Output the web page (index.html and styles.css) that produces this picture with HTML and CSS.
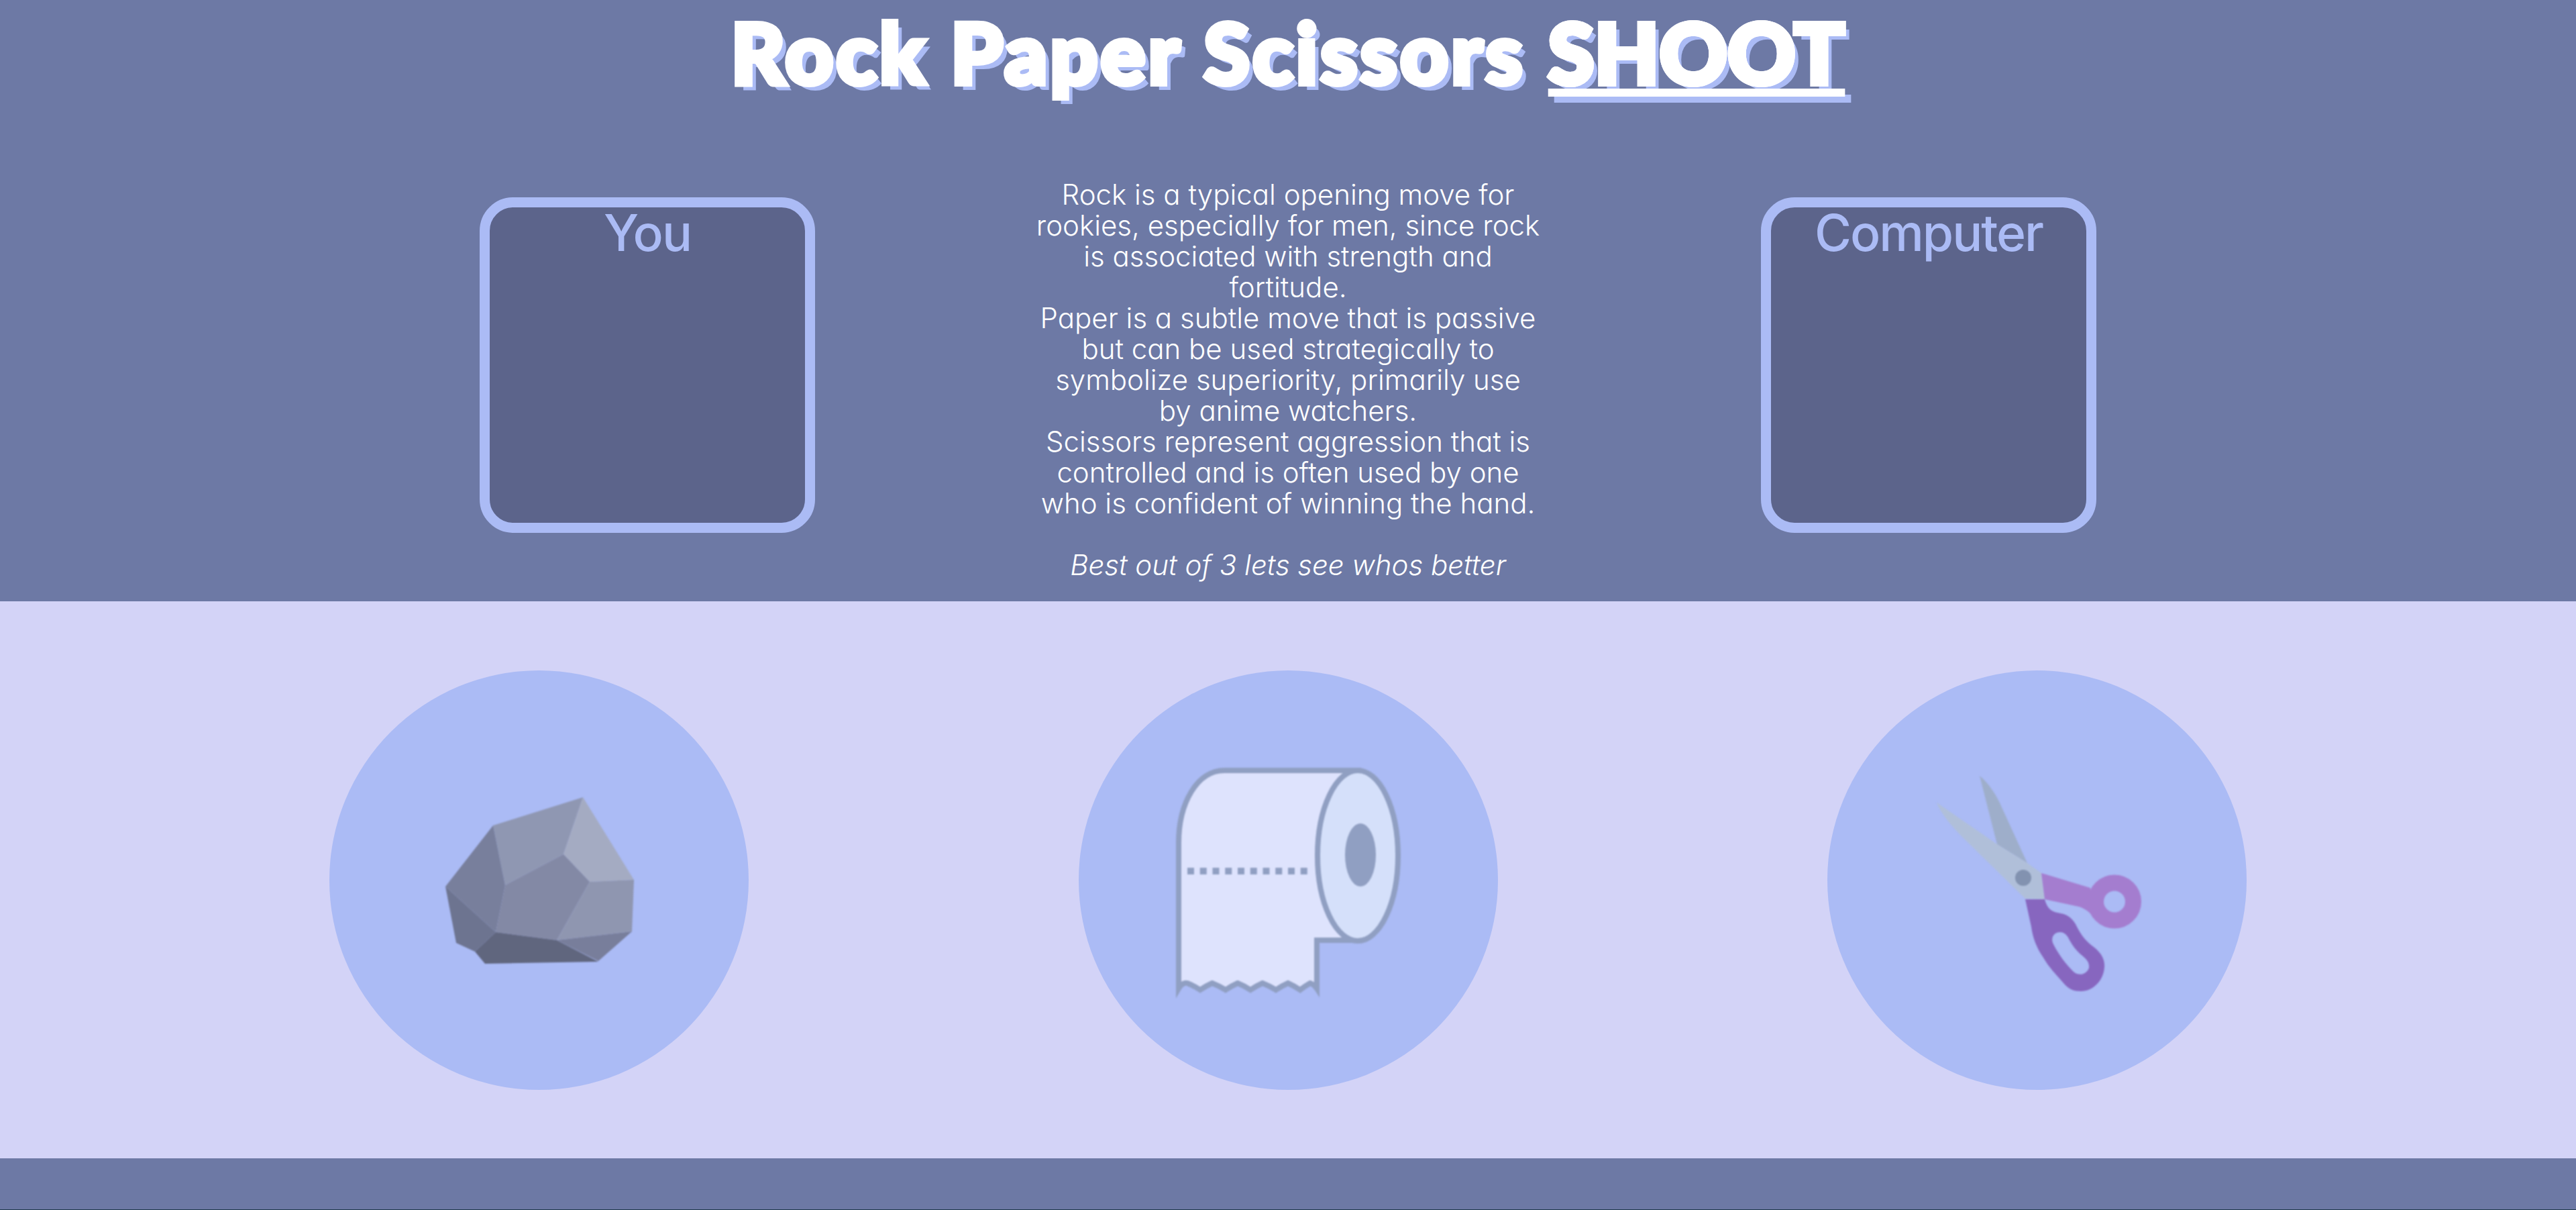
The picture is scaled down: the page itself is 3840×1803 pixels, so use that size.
FILE: index.html
```html
<!DOCTYPE html>
<html lang="en">
<head>
    <meta charset="UTF-8">
    <meta name="viewport" content="width=device-width, initial-scale=1.0">
    <title>Rock Paper Scissors</title>
    <link rel="stylesheet" href="styles.css">
</head>
<body>
    <header class="top">
        <h1>Rock Paper Scissors <u>SHOOT</u></h1>
        <div class="arena">
            <div class="player-box"><h2>You</h2></div>
            <p class="rules">
                Rock is a typical opening move for rookies, especially for men, since rock is associated with strength and fortitude.<br>
                Paper is a subtle move that is passive but can be used strategically to symbolize superiority, primarily use by anime watchers.<br>
                Scissors represent aggression that is controlled and is often used by one who is confident of winning the hand.<br>
                <br>
                <em>Best out of 3 lets see whos better</em>
            </p>
            <div class="player-box"><h2>Computer</h2></div>
        </div>
    </header>

    <main class="choices">
        <button class="choice" type="button" aria-label="Rock">
            <svg class="rock-icon" viewBox="3 0 360 320">
                <polygon fill="#8f97b2" points="114,79 248,37 219,122 132,168"/>
                <polygon fill="#a4abc2" points="248,37 324,160 258,163 219,122"/>
                <polygon fill="#8389a5" points="219,122 258,163 209,250 118,238 132,168"/>
                <polygon fill="#8f96b0" points="258,163 324,160 321,237 209,250"/>
                <polygon fill="#787f9c" points="114,79 132,168 118,238 43,170"/>
                <polygon fill="#6d7490" points="43,170 118,238 87,267 59,254"/>
                <polygon fill="#60667e" points="118,238 209,250 271,282 102,285 87,267"/>
                <polygon fill="#787e9b" points="209,250 321,237 271,281"/>
            </svg>
        </button>
        <button class="choice" type="button" aria-label="Paper">
            <svg class="paper-icon" viewBox="0 0 400 400">
                <path fill="#dee3fd" stroke="#909fc2" stroke-width="8" d="M243 290 H305 V37 H105 C65 37 37 85 37 145 V362 Q43 352 50 354 Q60 358 69 364 Q78 358 87 354 Q97 358 107 364 Q116 358 125 354 Q135 358 144 364 Q153 358 162 354 Q172 358 182 364 Q191 358 200 354 Q209 358 218 364 Q226 358 233 354 Q239 356 243 362 Z"/>
                <ellipse cx="304" cy="164" rx="60" ry="127" fill="#d5e0fa" stroke="#909fc2" stroke-width="8"/>
                <ellipse cx="308" cy="163" rx="23" ry="47" fill="#909fc2"/>
                <line x1="50" y1="187" x2="229" y2="187" stroke="#909fc2" stroke-width="10" stroke-dasharray="10 8.75"/>
            </svg>
        </button>
        <button class="choice" type="button" aria-label="Scissors">
            <svg class="scissors-icon" viewBox="-3 -10 360 380">
                <path fill="#9eaeca" d="M92 25 C105 35 118 55 125 72 L163 155 L118 127 Z"/>
                <path fill="#b0bfd9" d="M28 65 L118 127 L163 155 L184 170 L189 209 L160 208 L67 117 C50 100 35 82 28 65 Z"/>
                <circle cx="157" cy="177" r="12" fill="#8292b0"/>
                <path fill="#a47dcf" d="M184 170 L257 192 L265 240 C258 230 252 224 240 220 L189 209 Z"/>
                <circle cx="293" cy="212.500" r="28" fill="none" stroke="#a47dcf" stroke-width="24"/>
                <path fill="#8766bf" fill-rule="evenodd" d="M160 209 H189 C192 220 197 227 208 229 C222 231 229 236 235 246 C241 258 247 268 258 277 C272 287 279 297 278 310 C277 330 261 346 243 346 C232 346 225 343 218 335 C205 320 195 310 187 296 C176 280 171 265 169 250 Z M212 258 C203 258 197 266 202 276 C210 292 221 306 232 317 C240 324 252 321 255 311 C256 303 251 298 245 293 C235 285 229 276 224 266 C221 261 217 258 212 258 Z"/>
            </svg>
        </button>
    </main>

    <footer class="bottom"></footer>
</body>
</html>
```

FILE: styles.css
```css
body {
    margin: 0;
    background-color: #1f3a4d;
    font-family: 'Inter', 'Liberation Sans', sans-serif;
    font-feature-settings: 'cv11';
}

.top {
    height: 896px;
    background-color: #6d79a5;
    color: #ffffff;
    text-align: center;
}

h1 {
    margin: 0 0 113px;
    font-family: 'Lato', 'Liberation Sans', sans-serif;
    font-size: 124px;
    font-weight: 900;
    line-height: 154px;
    letter-spacing: 4.5px;
    -webkit-text-stroke: 8px #ffffff;
    text-shadow: 9px 9px 0 #abbbf5;
}

h1 u {
    letter-spacing: 1px;
}

.arena {
    display: flex;
    justify-content: space-between;
    align-items: flex-start;
    padding: 0 715px;
}

.player-box {
    box-sizing: border-box;
    width: 500px;
    height: 500px;
    margin-top: 27px;
    border: 15px solid #abbbf5;
    border-radius: 50px;
    background-color: #5c648b;
    color: #abbbf5;
}

.player-box h2 {
    margin: 0;
    font-size: 75px;
    font-weight: 500;
    line-height: 76px;
    letter-spacing: -2px;
}

.rules {
    width: 752px;
    margin: 0;
    font-size: 42px;
    font-weight: 300;
    line-height: 46px;
}

.choices {
    display: flex;
    justify-content: space-evenly;
    align-items: center;
    height: 830px;
    background-color: #d3d3f7;
}

.choice {
    display: flex;
    justify-content: center;
    align-items: center;
    width: 625px;
    height: 625px;
    padding: 0;
    border: none;
    border-radius: 50%;
    background-color: #abbbf5;
}

.choice svg {
    filter: blur(1px);
}

.rock-icon {
    width: 360px;
    height: 320px;
}

.paper-icon {
    width: 400px;
    height: 400px;
}

.scissors-icon {
    width: 360px;
    height: 380px;
}

.bottom {
    height: 76px;
    background-color: #6d79a5;
}
```
